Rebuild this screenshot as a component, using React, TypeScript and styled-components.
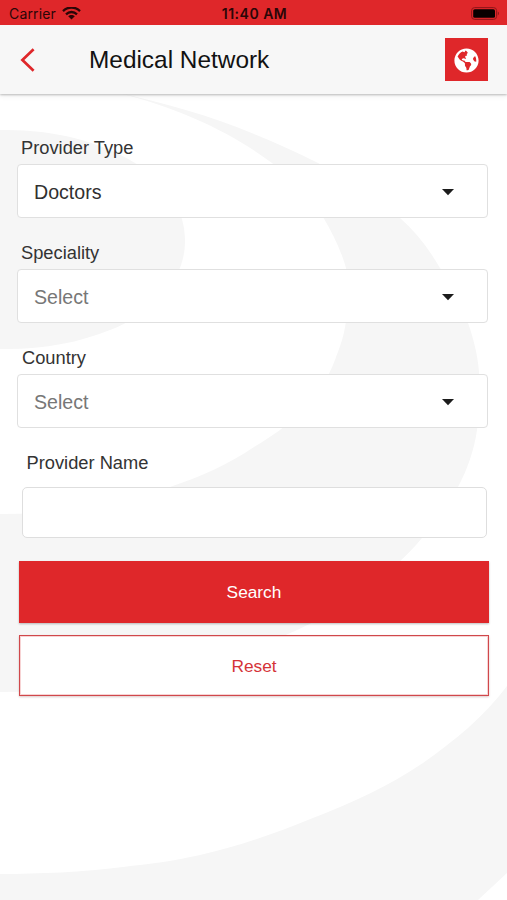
import React from "react";
import { FaGlobeAmericas } from "react-icons/fa";
import styled, { createGlobalStyle } from "styled-components";

const RED = "#df272a";
const SANS = '"Liberation Sans", Arial, sans-serif';

const GlobalStyle = createGlobalStyle`
  *, *::before, *::after { box-sizing: border-box; }
  body { margin: 0; background: #fff; font-family: ${SANS}; }
`;

const Screen = styled.div`
  position: relative;
  display: flex;
  flex-direction: column;
  height: 900px;
  overflow: hidden;
  background: #fff;
`;

const Backdrop = styled.svg`
  position: absolute;
  inset: 0;
  width: 507px;
  height: 900px;
  fill: #f6f6f6;
`;

const StatusBar = styled.div`
  position: relative;
  z-index: 2;
  display: grid;
  grid-template-columns: 1fr auto 1fr;
  align-items: center;
  height: 25px;
  padding: 3px 7px 0 9px;
  background: ${RED};
  color: #2a0607;
  font-family: Inter, sans-serif;
  font-size: 14px;
  line-height: 20px;
`;

const Carrier = styled.div`
  display: flex;
  align-items: center;
  gap: 6px;
  letter-spacing: 0.15px;
`;

const Clock = styled.div`
  font-weight: 600;
  letter-spacing: 0.5px;
`;

const Battery = styled.svg`
  justify-self: end;
  margin-bottom: 2px;
`;

const Header = styled.header`
  position: relative;
  z-index: 1;
  display: flex;
  align-items: center;
  height: 69px;
  padding: 0 19.5px 0 20px;
  background: #f7f7f7;
  box-shadow: 0 1px 2px rgba(0, 0, 0, 0.24), 0 3px 5px rgba(0, 0, 0, 0.05);
`;

const BackButton = styled.button`
  display: flex;
  width: 69px;
  padding: 0;
  border: 0;
  background: none;
`;

const Title = styled.h1`
  flex: 1;
  margin: 0;
  color: #121212;
  font-size: 24.4px;
  font-weight: 400;
  line-height: 30px;
`;

const GlobeButton = styled.button`
  display: flex;
  align-items: center;
  justify-content: center;
  width: 43px;
  height: 43px;
  padding: 2px 0 0;
  border: 0;
  background: ${RED};
  color: #fff;
  font-size: 25px;
`;

const Form = styled.form`
  position: relative;
  display: flex;
  flex-direction: column;
  padding: 40px 19px 0 17px;
`;

const Field = styled.div`
  display: flex;
  flex-direction: column;
  height: 105px;
`;

const Label = styled.label<{ $indent?: number }>`
  height: 26px;
  padding: 1px 0 0 ${(p) => p.$indent ?? 4}px;
  color: #333;
  font-size: 18.3px;
  line-height: 26px;
`;

const SelectBox = styled.div<{ $placeholder?: boolean }>`
  display: flex;
  align-items: center;
  justify-content: space-between;
  height: 54px;
  margin-top: 4px;
  padding: 2px 33px 0 16px;
  border: 1px solid #e0e0e0;
  border-radius: 4px;
  background: #fff;
  color: ${(p) => (p.$placeholder ? "#777" : "#303030")};
  font-size: 19.6px;
`;

const TextInput = styled.input`
  height: 51px;
  margin: 12px 1px 0 4.5px;
  padding: 0 12px;
  border: 1px solid #dedede;
  border-radius: 5px;
  background: #fff;
  font: 19.6px ${SANS};
  outline: none;
`;

const Buttons = styled.div`
  display: flex;
  flex-direction: column;
  gap: 12px;
  margin: 23px -1px 0 2px;
`;

const ActionButton = styled.button<{ $outline?: boolean }>`
  height: ${(p) => (p.$outline ? 61 : 62)}px;
  padding: 1px 0 0;
  border: ${(p) => (p.$outline ? "1px solid #d0484b" : "0")};
  background: ${(p) => (p.$outline ? "#fff" : RED)};
  color: ${(p) => (p.$outline ? "#d53338" : "#fff")};
  box-shadow: ${(p) =>
    p.$outline
      ? "inset 0 0 0 1px #f7d3d4, 0 1px 2px rgba(90, 0, 0, 0.22)"
      : "0 1px 2px rgba(0, 0, 0, 0.26)"};
  font: 17.3px ${SANS};
`;

const Swirl = () => (
  <Backdrop viewBox="0 0 507 900" aria-hidden="true">
    <path d="M0 130 C50 129 98 140 135 163 C168 184 186 211 185 243 C184 282 152 314 110 330 C78 343 40 350 0 349 Z" />
    <path d="M115 92 C165 103 212 116 254 134 C277 143 298 153 318 163 C350 180 376 197 400 218 C416 232 429 249 440 268 C454 288 462 306 468 323 C474 340 478 357 479 372 C480 393 480 410 477 430 C474 451 467 470 458 487 C449 506 436 523 422 538 C391 575 346 608 295 631 C250 651 205 665 160 675 C105 688 50 692 0 692 V514 C58 514 118 505 170 487 C200 477 229 464 254 447 C290 426 320 400 335 360 C344 336 350 322 346 268 C341 250 333 234 323 217 C308 195 290 178 272 163 C230 132 182 109 115 92 Z" />
    <path d="M507 686 C483 718 455 740 423 763 C389 786 352 803 313 818 C277 833 239 846 200 855 C174 861 149 864 123 867 C82 872 40 874 0 874 V900 H478 L507 873 Z" />
  </Backdrop>
);

const WifiIcon = () => (
  <svg width="19" height="14" viewBox="0 0 19 14" aria-hidden="true">
    <g fill="none" stroke="currentColor" strokeWidth="2.3">
      <path d="M1 4.1 C5.8 -0.7 13.2 -0.7 18 4.1" />
      <path d="M4 7.3 C7.2 4.2 11.8 4.2 15 7.3" />
    </g>
    <path d="M9.5 12.5 L6.2 9.3 C8 7.5 11 7.5 12.8 9.3 Z" fill="currentColor" />
  </svg>
);

const Caret = () => (
  <svg width="12" height="7" viewBox="0 0 12 7" aria-hidden="true">
    <path d="M0 0 H12 L6 6.3 Z" fill="#1c1c1c" />
  </svg>
);

export default function App() {
  return (
    <Screen>
      <GlobalStyle />
      <Swirl />
      <StatusBar>
        <Carrier>
          Carrier
          <WifiIcon />
        </Carrier>
        <Clock>11:40 AM</Clock>
        <Battery width="29" height="13" viewBox="0 0 29 13" aria-hidden="true">
          <rect x="0.6" y="0.6" width="25" height="11.8" rx="3" fill="none" stroke="#8f1619" />
          <rect x="2.2" y="2.2" width="21.8" height="8.6" rx="1.6" fill="#080000" />
          <path d="M26.8 4.6 C28.4 5.2 28.4 7.8 26.8 8.4 Z" fill="#8f1619" />
        </Battery>
      </StatusBar>
      <Header>
        <BackButton type="button" aria-label="Back">
          <svg width="16" height="24" viewBox="0 0 16 24" aria-hidden="true">
            <path d="M13.6 1.2 L2.4 12 L13.6 22.8" fill="none" stroke={RED} strokeWidth="2.7" />
          </svg>
        </BackButton>
        <Title>Medical Network</Title>
        <GlobeButton type="button" aria-label="Language">
          <FaGlobeAmericas />
        </GlobeButton>
      </Header>
      <Form>
        <Field>
          <Label>Provider Type</Label>
          <SelectBox>
            Doctors
            <Caret />
          </SelectBox>
        </Field>
        <Field>
          <Label>Speciality</Label>
          <SelectBox $placeholder>
            Select
            <Caret />
          </SelectBox>
        </Field>
        <Field>
          <Label $indent={5}>Country</Label>
          <SelectBox $placeholder>
            Select
            <Caret />
          </SelectBox>
        </Field>
        <Label $indent={9.5} htmlFor="provider-name">
          Provider Name
        </Label>
        <TextInput id="provider-name" />
        <Buttons>
          <ActionButton type="button">Search</ActionButton>
          <ActionButton type="button" $outline>
            Reset
          </ActionButton>
        </Buttons>
      </Form>
    </Screen>
  );
}
